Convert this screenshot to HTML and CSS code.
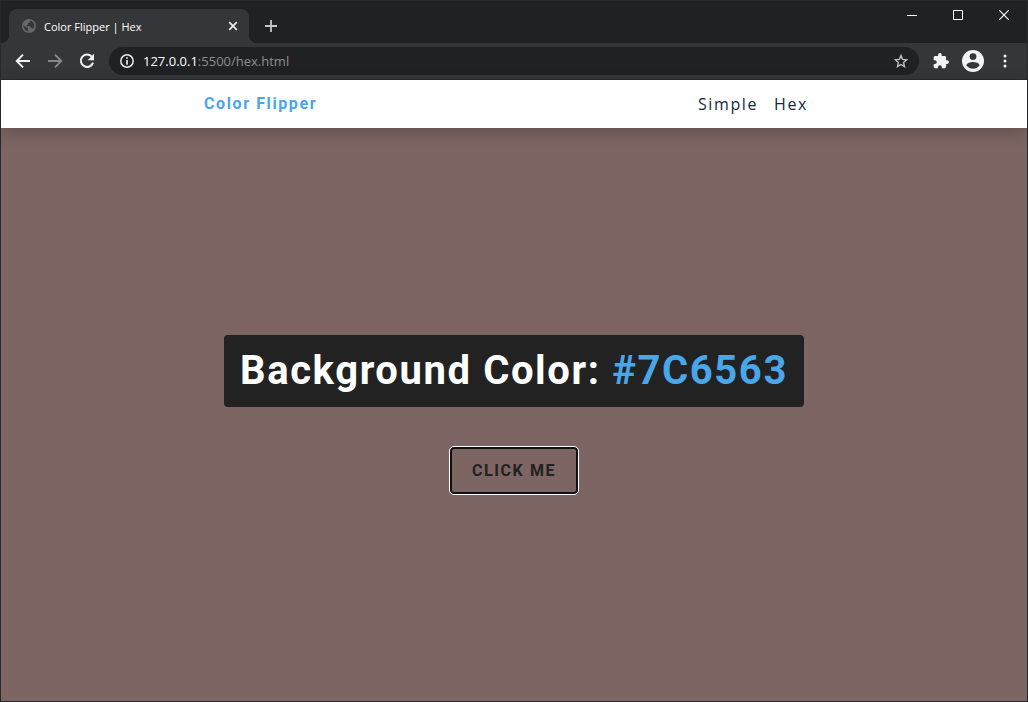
FILE: index.html
```html
<!DOCTYPE html>
<html lang="en">
<head>
<meta charset="utf-8">
<meta name="viewport" content="width=device-width, initial-scale=1">
<title>Color Flipper | Hex</title>
<link rel="stylesheet" href="styles.css">
</head>
<body>
<div class="window">
  <header class="tabstrip">
    <div class="tab">
      <svg class="globe" width="14" height="14" viewBox="0 0 14 14" aria-hidden="true"><circle cx="7" cy="7" r="7" fill="#65696e"/><path d="M1.300 6.200l3 2.200 1.800.2-.4 1.600 1.100 2.200C4 12.200 1.400 9.600 1.300 6.200zM8.400 1.600L8 3.200 6 4l.2 1.400-1.600.6L5 7.200l3.400.2 1.200 1.800 1.800.4C13.400 6.600 12 2.600 8.400 1.600z" fill="#35363a"/></svg>
      <span class="tab-title">Color Flipper | Hex</span>
      <button class="plain tab-close" aria-label="Close tab"><svg width="10" height="10" viewBox="0 0 10 10"><path d="M1.200 1.200l7.600 7.600M8.800 1.200L1.200 8.800" stroke="#e8eaed" stroke-width="1.700"/></svg></button>
    </div>
    <button class="plain new-tab" aria-label="New tab"><svg width="12" height="12" viewBox="0 0 12 12"><path d="M6 0v12M0 6h12" stroke="#c4c7ca" stroke-width="1.800"/></svg></button>
    <div class="controls">
      <button class="plain control" aria-label="Minimize"><svg width="10" height="10" viewBox="0 0 10 10"><path d="M0 5.500h10" stroke="#fff"/></svg></button>
      <button class="plain control" aria-label="Maximize"><svg width="10" height="10" viewBox="0 0 10 10"><path d="M.5.5h9v9h-9z" fill="none" stroke="#fff"/></svg></button>
      <button class="plain control" aria-label="Close window"><svg width="10" height="10" viewBox="0 0 10 10"><path d="M0 0l10 10M10 0L0 10" stroke="#fff" stroke-width="1.200"/></svg></button>
    </div>
  </header>
  <div class="toolbar">
    <div class="history">
      <button class="plain" aria-label="Back"><svg width="16" height="16" viewBox="0 0 16 16"><path d="M15 8H2.500M8 1.700L1.700 8 8 14.300" fill="none" stroke="#f1f3f4" stroke-width="1.900"/></svg></button>
      <button class="plain" aria-label="Forward"><svg width="16" height="16" viewBox="0 0 16 16"><path d="M1 8h12.500M8 1.700L14.300 8 8 14.300" fill="none" stroke="#85878a" stroke-width="1.900"/></svg></button>
      <button class="plain" aria-label="Reload"><svg width="16" height="16" viewBox="0 0 16 16"><path d="M12.700 3.600A6.200 6.200 0 1 0 14 9.600" fill="none" stroke="#f1f3f4" stroke-width="2"/><path d="M15 .8v6.400H8.600z" fill="#f1f3f4"/></svg></button>
    </div>
    <div class="omnibox">
      <svg width="14" height="14" viewBox="0 0 14 14" aria-hidden="true"><circle cx="7" cy="7" r="6.200" fill="none" stroke="#e8eaed" stroke-width="1.500"/><path d="M7 3.200v1.600M7 6v4.700" stroke="#e8eaed" stroke-width="1.700"/></svg>
      <span class="url"><span class="host">127.0.0.1</span>:5500/hex.html</span>
      <button class="plain" aria-label="Bookmark this page"><svg width="14" height="14" viewBox="0 0 14 14"><path d="M7 1.400l1.600 3.900 4.100.4-3.100 2.800.9 4.100L7 10.400l-3.500 2.200.9-4.100-3.100-2.800 4.100-.4z" fill="none" stroke="#c4c7ca" stroke-width="1.300"/></svg></button>
    </div>
    <button class="plain" aria-label="Extensions"><svg width="16" height="16" viewBox="1 1 22 22"><path fill="#f1f3f4" d="M20.500 11H19V7c0-1.100-.9-2-2-2h-4V3.500a2.500 2.500 0 0 0-5 0V5H4c-1.100 0-2 .9-2 2v3.800h1.500a2.700 2.700 0 0 1 0 5.400H2V20c0 1.100.9 2 2 2h3.800v-1.500a2.700 2.700 0 0 1 5.400 0V22H17c1.100 0 2-.9 2-2v-4h1.500a2.500 2.500 0 0 0 0-5z"/></svg></button>
    <button class="plain avatar" aria-label="Profile"><svg width="22" height="22" viewBox="0 0 22 22"><circle cx="11" cy="11" r="11" fill="#f1f3f4"/><circle cx="11" cy="6.600" r="3.400" fill="#35363a"/><path d="M4.400 15.300c0-2.200 4.400-3.400 6.600-3.400s6.600 1.200 6.600 3.400c-1.400 2.200-3.900 3.500-6.600 3.500s-5.200-1.300-6.600-3.500z" fill="#35363a"/></svg></button>
    <button class="plain" aria-label="Menu"><svg width="16" height="16" viewBox="0 0 16 16"><path d="M8 1.500a1.500 1.500 0 1 1 0 3 1.500 1.500 0 0 1 0-3zm0 5a1.500 1.500 0 1 1 0 3 1.500 1.500 0 0 1 0-3zm0 5a1.500 1.500 0 1 1 0 3 1.500 1.500 0 0 1 0-3z" fill="#f1f3f4"/></svg></button>
  </div>
  <div class="page">
    <nav class="nav">
      <div class="nav-center">
        <h4 class="brand">Color Flipper</h4>
        <ul class="nav-links">
          <li><a href="#simple">Simple</a></li>
          <li><a href="#hex">Hex</a></li>
        </ul>
      </div>
    </nav>
    <main class="main">
      <h2 class="readout">Background Color: <span class="color">#7C6563</span></h2>
      <button class="btn">Click me</button>
    </main>
  </div>
</div>
</body>
</html>
```
FILE: styles.css
```css
* {
  box-sizing: border-box;
  margin: 0;
  padding: 0;
}

.window {
  display: flex;
  flex-direction: column;
  min-height: 100vh;
  border: 1px solid #28292c;
  background: #202124;
  font-family: "Noto Sans", sans-serif;
}

.plain {
  display: flex;
  align-items: center;
  justify-content: center;
  border: 0;
  background: none;
}

.tabstrip {
  display: flex;
  align-items: flex-end;
  height: 42px;
  padding-left: 8px;
}

.tab {
  position: relative;
  display: flex;
  align-items: center;
  gap: 8px;
  width: 240px;
  height: 34px;
  padding: 0 11px 0 13px;
  border-radius: 8px 8px 0 0;
  background: #35363a;
}

.tab::before,
.tab::after {
  content: "";
  position: absolute;
  bottom: 0;
  width: 8px;
  height: 8px;
}

.tab::before {
  right: 100%;
  background: radial-gradient(circle at 0 0, #202124 8px, #35363a 8px);
}

.tab::after {
  left: 100%;
  background: radial-gradient(circle at 100% 0, #202124 8px, #35363a 8px);
}

.tab-title {
  flex: 1;
  color: #fff;
  font-family: "Open Sans", sans-serif;
  font-size: 11px;
}

.new-tab {
  width: 28px;
  height: 34px;
  margin-left: 8px;
}

.controls {
  display: flex;
  align-self: flex-start;
  margin-left: auto;
}

.control {
  width: 46px;
  height: 28px;
}

.toolbar {
  display: flex;
  align-items: center;
  gap: 14px;
  height: 37px;
  padding: 0 14px;
  border-bottom: 1px solid #28292c;
  background: #35363a;
}

.history {
  display: flex;
  gap: 16px;
}

.omnibox {
  display: flex;
  flex: 1;
  align-items: center;
  gap: 9px;
  height: 28px;
  padding: 0 11px;
  border-radius: 14px;
  background: #202124;
}

.url {
  flex: 1;
  color: #8b8e92;
  font-family: "Open Sans", sans-serif;
  font-size: 13px;
}

.host {
  color: #fff;
}

.avatar {
  margin: 0 -1px;
}

.page {
  display: flex;
  flex: 1;
  flex-direction: column;
  background: #7c6563;
}

.nav {
  display: flex;
  justify-content: center;
  padding: 0 16px;
  background: #fff;
  box-shadow: 0 5px 15px rgba(0, 0, 0, 0.2);
}

.nav-center {
  display: flex;
  flex: 1;
  align-items: center;
  justify-content: space-between;
  max-width: 620px;
  height: 48px;
}

.brand {
  color: #49a6e9;
  font: 700 16px/24px Roboto, sans-serif;
  letter-spacing: 0.1rem;
}

.nav-links {
  display: flex;
  gap: 16px;
  padding-right: 16px;
  list-style: none;
}

.nav-links a {
  color: #102a42;
  font: 500 16px/24px "Open Sans", sans-serif;
  letter-spacing: 0.1rem;
  text-decoration: none;
}

.main {
  display: flex;
  flex: 1;
  flex-direction: column;
  align-items: center;
  justify-content: center;
  gap: 40px;
  padding: 16px;
}

.readout {
  padding: 16px;
  border-radius: 4px;
  background: #222;
  color: #fff;
  font: 700 40px/40px Roboto, sans-serif;
  letter-spacing: 0.1rem;
}

.color {
  color: #49a6e9;
}

.btn {
  padding: 12px 20px;
  border: 2px solid #101010;
  border-radius: 4px;
  outline: 1px solid #fff;
  background: transparent;
  color: #222;
  font: 700 16px/19px Roboto, sans-serif;
  letter-spacing: 0.1rem;
  text-transform: uppercase;
}
```
